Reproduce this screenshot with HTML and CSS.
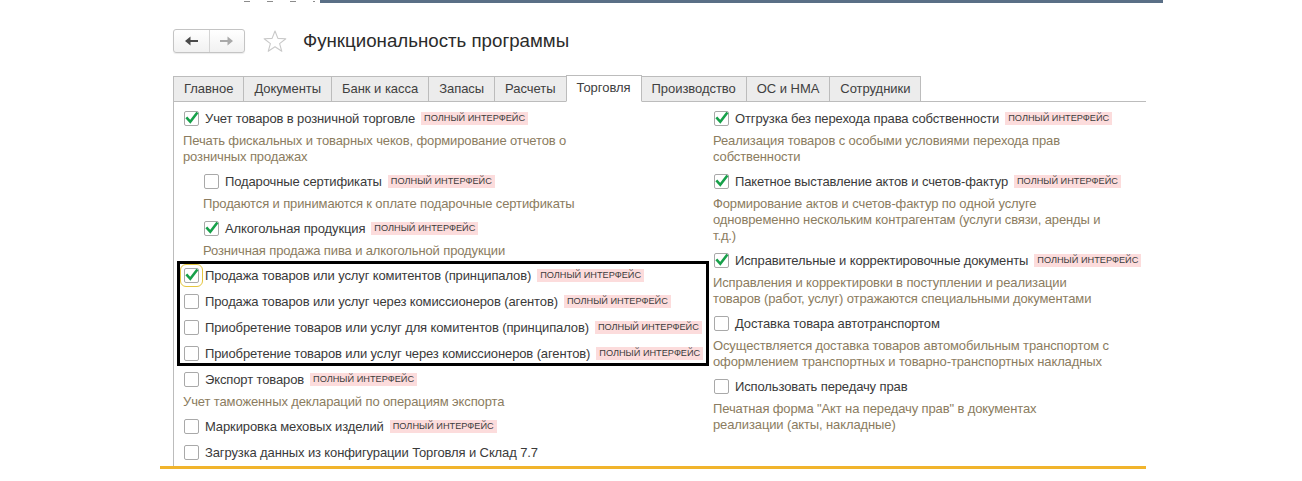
FILE: index.html
```html
<!DOCTYPE html>
<html lang="ru">
<head>
<meta charset="utf-8">
<title>Функциональность программы</title>
<link rel="stylesheet" href="styles.css">
</head>
<body>
<div class="topline">
  <span class="dash"></span><span class="dash"></span><span class="dash"></span><span class="dash short"></span>
  <span class="bar"></span>
</div>

<div class="header">
  <div class="nav">
    <span class="navbtn">
      <svg width="13" height="10" viewBox="0 0 13 10"><path d="M0 5 L5.5 0.5 L5.5 4 L13 4 L13 6 L5.5 6 L5.5 9.5 Z" fill="#4a4a4a"/></svg>
    </span>
    <span class="navbtn sep">
      <svg width="13" height="10" viewBox="0 0 13 10"><path d="M13 5 L7.5 0.5 L7.5 4 L0 4 L0 6 L7.5 6 L7.5 9.5 Z" fill="#a9a9a9"/></svg>
    </span>
  </div>
  <svg class="star" width="24" height="23" viewBox="0 0 24 23"><path d="M12 1 L14.9 8.4 L22.8 8.7 L16.6 13.6 L18.8 21.3 L12 16.8 L5.2 21.3 L7.4 13.6 L1.2 8.7 L9.1 8.4 Z" fill="none" stroke="#c9c9c9" stroke-width="1.1" stroke-linejoin="round"/></svg>
  <h1 class="title">Функциональность программы</h1>
</div>

<div class="tabs">
  <span class="tab">Главное</span>
  <span class="tab">Документы</span>
  <span class="tab">Банк и касса</span>
  <span class="tab">Запасы</span>
  <span class="tab">Расчеты</span>
  <span class="tab active">Торговля</span>
  <span class="tab">Производство</span>
  <span class="tab">ОС и НМА</span>
  <span class="tab">Сотрудники</span>
</div>

<div class="panel">
  <div class="col">
    <div class="item">
      <div class="row"><span class="cb on"><svg viewBox="0 0 15 15"><path d="M3.2 7.4 L6.3 10.8 L12.6 2.6"/></svg></span>Учет товаров в розничной торговле<span class="badge">ПОЛНЫЙ ИНТЕРФЕЙС</span></div>
      <div class="desc">Печать фискальных и товарных чеков, формирование отчетов о<br>розничных продажах</div>
    </div>
    <div class="item nested">
      <div class="row"><span class="cb"></span>Подарочные сертификаты<span class="badge">ПОЛНЫЙ ИНТЕРФЕЙС</span></div>
      <div class="desc">Продаются и принимаются к оплате подарочные сертификаты</div>
    </div>
    <div class="item nested">
      <div class="row"><span class="cb on"><svg viewBox="0 0 15 15"><path d="M3.2 7.4 L6.3 10.8 L12.6 2.6"/></svg></span>Алкогольная продукция<span class="badge">ПОЛНЫЙ ИНТЕРФЕЙС</span></div>
      <div class="desc">Розничная продажа пива и алкогольной продукции</div>
    </div>
    <div class="framed">
      <div class="row"><span class="cb on focus"><svg viewBox="0 0 15 15"><path d="M3.2 7.4 L6.3 10.8 L12.6 2.6"/></svg></span>Продажа товаров или услуг комитентов (принципалов)<span class="badge">ПОЛНЫЙ ИНТЕРФЕЙС</span></div>
      <div class="row"><span class="cb"></span>Продажа товаров или услуг через комиссионеров (агентов)<span class="badge">ПОЛНЫЙ ИНТЕРФЕЙС</span></div>
      <div class="row"><span class="cb"></span>Приобретение товаров или услуг для комитентов (принципалов)<span class="badge">ПОЛНЫЙ ИНТЕРФЕЙС</span></div>
      <div class="row"><span class="cb"></span>Приобретение товаров или услуг через комиссионеров (агентов)<span class="badge">ПОЛНЫЙ ИНТЕРФЕЙС</span></div>
    </div>
    <div class="item">
      <div class="row"><span class="cb"></span>Экспорт товаров<span class="badge">ПОЛНЫЙ ИНТЕРФЕЙС</span></div>
      <div class="desc">Учет таможенных деклараций по операциям экспорта</div>
    </div>
    <div class="row"><span class="cb"></span>Маркировка меховых изделий<span class="badge">ПОЛНЫЙ ИНТЕРФЕЙС</span></div>
    <div class="row"><span class="cb"></span>Загрузка данных из конфигурации Торговля и Склад 7.7</div>
  </div>

  <div class="col">
    <div class="item">
      <div class="row"><span class="cb on"><svg viewBox="0 0 15 15"><path d="M3.2 7.4 L6.3 10.8 L12.6 2.6"/></svg></span>Отгрузка без перехода права собственности<span class="badge">ПОЛНЫЙ ИНТЕРФЕЙС</span></div>
      <div class="desc">Реализация товаров с особыми условиями перехода прав<br>собственности</div>
    </div>
    <div class="item">
      <div class="row"><span class="cb on"><svg viewBox="0 0 15 15"><path d="M3.2 7.4 L6.3 10.8 L12.6 2.6"/></svg></span>Пакетное выставление актов и счетов-фактур<span class="badge">ПОЛНЫЙ ИНТЕРФЕЙС</span></div>
      <div class="desc">Формирование актов и счетов-фактур по одной услуге<br>одновременно нескольким контрагентам (услуги связи, аренды и<br>т.д.)</div>
    </div>
    <div class="item">
      <div class="row"><span class="cb on"><svg viewBox="0 0 15 15"><path d="M3.2 7.4 L6.3 10.8 L12.6 2.6"/></svg></span>Исправительные и корректировочные документы<span class="badge">ПОЛНЫЙ ИНТЕРФЕЙС</span></div>
      <div class="desc">Исправления и корректировки в поступлении и реализации<br>товаров (работ, услуг) отражаются специальными документами</div>
    </div>
    <div class="item">
      <div class="row"><span class="cb"></span>Доставка товара автотранспортом</div>
      <div class="desc">Осуществляется доставка товаров автомобильным транспортом с<br>оформлением транспортных и товарно-транспортных накладных</div>
    </div>
    <div class="item">
      <div class="row"><span class="cb"></span>Использовать передачу прав</div>
      <div class="desc">Печатная форма "Акт на передачу прав" в документах<br>реализации (акты, накладные)</div>
    </div>
  </div>
</div>
<div class="yellow"></div>
</body>
</html>
```
FILE: styles.css
```css
* { box-sizing: border-box; }
html, body { margin: 0; padding: 0; }
body {
  width: 1302px;
  height: 481px;
  overflow: hidden;
  background: #fff;
  font-family: "Liberation Sans", Arial, sans-serif;
  font-size: 13px;
  letter-spacing: -0.12px;
  color: #3a3a3a;
}

.topline {
  display: flex;
  align-items: flex-start;
  height: 3px;
  padding-left: 244px;
}
.dash {
  width: 6px;
  height: 1px;
  margin-top: 1px;
  margin-right: 17px;
  background: #8c8c8c;
}
.dash.short { width: 2px; margin-right: 5px; }
.bar {
  width: 843px;
  height: 3px;
  background: #5a6f86;
}

.header {
  display: flex;
  align-items: center;
  margin: 26px 0 0 173px;
  height: 24px;
}
.nav {
  display: flex;
  width: 72px;
  height: 24px;
  border: 1px solid #c4c4c4;
  border-radius: 3px;
  background: linear-gradient(#ffffff, #f1f1f1);
  box-shadow: 0 1px 1px rgba(0,0,0,0.08);
}
.navbtn {
  flex: 1;
  display: flex;
  align-items: center;
  justify-content: center;
}
.navbtn.sep { border-left: 1px solid #d4d4d4; }
.star { margin-left: 18px; }
.title {
  margin: 0 0 0 16px;
  font-size: 18.7px;
  font-weight: normal;
  letter-spacing: 0;
  color: #2b2b2b;
  line-height: 24px;
}

.tabs {
  display: flex;
  width: 973px;
  margin: 23px 0 0 173px;
  border-bottom: 1px solid #bcbcbc;
  height: 26px;
  align-items: flex-end;
}
.tab {
  height: 26px;
  margin-bottom: -1px;
  padding: 0 10px;
  line-height: 24px;
  letter-spacing: -0.04px;
  border: 1px solid #bcbcbc;
  background: #ececec;
  color: #404040;
  white-space: nowrap;
}
.tab + .tab { margin-left: -1px; }
.tab.active {
  height: 27px;
  background: #fff;
  border-bottom-color: #fff;
  position: relative;
  z-index: 1;
}

.panel {
  display: grid;
  grid-template-columns: 530px 1fr;
  width: 986px;
  height: 364px;
  margin-left: 173px;
  padding: 3px 0 0 9px;
  border-left: 1px solid #bcbcbc;
  overflow: hidden;
}

.item { margin-bottom: 3px; }
.item.nested { margin-left: 20px; }

.row {
  display: flex;
  align-items: center;
  height: 26px;
  white-space: nowrap;
  color: #3a3a3a;
}
.item > .row { margin-bottom: 2px; }

.desc {
  line-height: 16px;
  color: #8b7c60;
  white-space: nowrap;
}

.cb {
  flex: none;
  width: 15px;
  height: 15px;
  margin: 0 6px 0 1px;
  border: 1px solid #a9a9a9;
  border-radius: 2px;
  background: #fff;
  position: relative;
}
.cb svg {
  position: absolute;
  left: -1px;
  top: -1px;
  width: 15px;
  height: 15px;
  overflow: visible;
}
.cb svg path {
  fill: none;
  stroke: #17a04a;
  stroke-width: 2.6;
  stroke-linecap: square;
}
.cb.focus {
  outline: 1px solid #e4c640;
  outline-offset: 3px;
}

.badge {
  margin-left: 6px;
  padding: 0 3px;
  font-size: 9.2px;
  letter-spacing: 0;
  line-height: 13px;
  background: #fcdcdc;
  color: #3c3c3c;
}

.framed {
  position: relative;
}
.framed::after {
  content: "";
  position: absolute;
  left: -6px;
  right: 4px;
  top: -1px;
  bottom: 0;
  border: 3px solid #000;
  pointer-events: none;
}

.yellow {
  width: 986px;
  height: 3px;
  margin-left: 160px;
  background: #f1b42c;
}
```
